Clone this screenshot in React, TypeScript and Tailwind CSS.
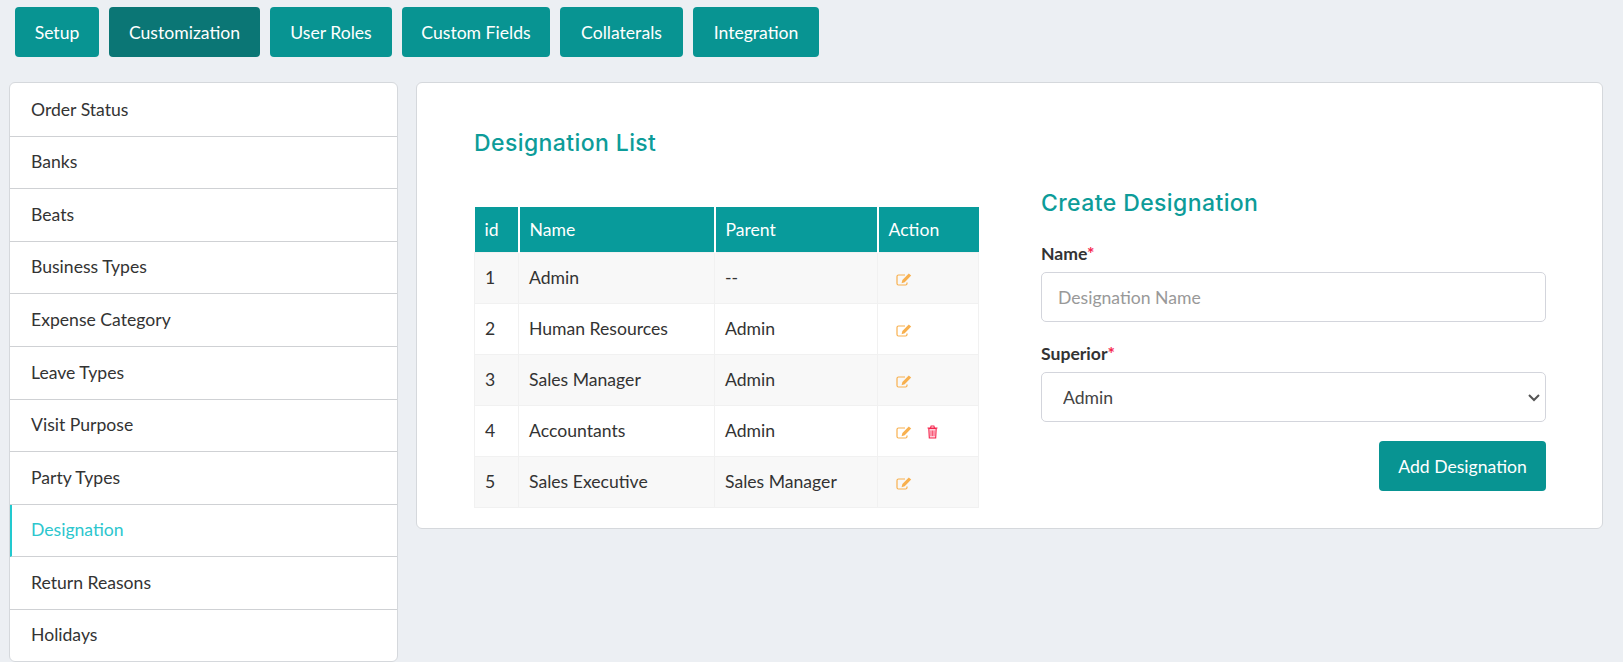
const tabs = [
  { label: "Setup", width: "w-[84px]" },
  { label: "Customization", width: "w-[151px]" },
  { label: "User Roles", width: "w-[122px]" },
  { label: "Custom Fields", width: "w-[148px]" },
  { label: "Collaterals", width: "w-[123px]" },
  { label: "Integration", width: "w-[126px]" },
];

const menu = [
  "Order Status",
  "Banks",
  "Beats",
  "Business Types",
  "Expense Category",
  "Leave Types",
  "Visit Purpose",
  "Party Types",
  "Designation",
  "Return Reasons",
  "Holidays",
];

const rows = [
  { id: 1, name: "Admin", parent: "--" },
  { id: 2, name: "Human Resources", parent: "Admin" },
  { id: 3, name: "Sales Manager", parent: "Admin" },
  { id: 4, name: "Accountants", parent: "Admin", canDelete: true },
  { id: 5, name: "Sales Executive", parent: "Sales Manager" },
];

function EditIcon() {
  return (
    <svg width="16" height="13" viewBox="0 0 16 13" className="shrink-0">
      <path
        d="M11 9.5v1A1.5 1.5 0 0 1 9.5 12h-7A1.5 1.5 0 0 1 1 10.5V3.5A1.5 1.5 0 0 1 2.5 2H9"
        fill="none"
        stroke="#f8b04e"
        strokeWidth="1.2"
      />
      <path d="M12.8.4l2.4 2.2-6.5 6.7-3.1.9.8-3.2z" fill="#f8b04e" />
    </svg>
  );
}

function TrashIcon() {
  return (
    <svg width="11" height="14" viewBox="0 0 11 14" className="shrink-0">
      <path d="M1.8 3.5h7.4l-.5 9.5H2.3z" fill="#ffd0da" stroke="#f5264e" strokeWidth="1.1" />
      <path d="M.5 3h10M3.5 3l.6-2h2.8l.6 2" fill="none" stroke="#f5264e" strokeWidth="1.1" />
      <path d="M4 5.5v5.5M5.5 5.5v5.5M7 5.5v5.5" stroke="#f5264e" strokeWidth="0.7" />
    </svg>
  );
}

export default function App() {
  return (
    <div className="h-[662px] overflow-hidden bg-[#eceff3] font-['Lato',sans-serif] text-[17.6px] text-[#333]">
      <div className="flex gap-[10px] pl-[15px] pt-[7px]">
        {tabs.map((tab) => (
          <button
            key={tab.label}
            className={`h-[50px] rounded-[4px] pt-[2px] text-white ${tab.width} ${
              tab.label === "Customization" ? "bg-[#0b7675]" : "bg-[#089492]"
            }`}
          >
            {tab.label}
          </button>
        ))}
      </div>

      <div className="mt-[25px] flex items-start gap-[18px] pl-[9px] pr-[20px]">
        <ul className="w-[389px] shrink-0 rounded-[6px] border border-[#d5d8dc] bg-white pt-[1px]">
          {menu.map((item, i) => (
            <li
              key={item}
              className={`flex h-[52.6px] items-center pl-[21px] last:h-[51px] ${
                i < menu.length - 1 ? "border-b border-[#cfd1d4]" : ""
              } ${item === "Designation" ? "border-l-[2px] !pl-[19px] border-l-[#22c9cf] text-[#2cc6ce]" : ""}`}
            >
              {item}
            </li>
          ))}
        </ul>

        <div className="flex h-[447px] flex-1 gap-[62px] rounded-[6px] border border-[#d5d8dc] bg-white pl-[57px] pr-[56px]">
          <div className="w-[505px] shrink-0">
            <h2 className="mt-[45px] h-[79px] font-['Inter',sans-serif] text-[23px] font-medium leading-[30px] tracking-[0.4px] text-[#0d9c99]">
              Designation List
            </h2>
            <table className="w-[505px] table-fixed border-collapse">
              <thead>
                <tr className="h-[45px] bg-[#089b9b] text-left text-white">
                  <th className="w-[44px] border-r-[2px] border-white pl-[10px] pt-[1px] font-normal">id</th>
                  <th className="w-[196px] border-r-[2px] border-white pl-[10px] pt-[1px] font-normal">Name</th>
                  <th className="w-[163px] border-r-[2px] border-white pl-[10px] pt-[1px] font-normal">Parent</th>
                  <th className="pl-[10px] pt-[1px] font-normal">Action</th>
                </tr>
              </thead>
              <tbody>
                {rows.map((row, i) => (
                  <tr key={row.id} className={`h-[51px] ${i % 2 === 0 ? "bg-[#f8f8f8]" : "bg-white"}`}>
                    <td className="border border-[#f1f1f1] pl-[10px] pt-[2px]">{row.id}</td>
                    <td className="border border-[#f1f1f1] pl-[10px] pt-[2px]">{row.name}</td>
                    <td className="border border-[#f1f1f1] pl-[10px] pt-[2px]">{row.parent}</td>
                    <td className="border border-[#f1f1f1] pl-[18px]">
                      <div className="flex items-center gap-[15px] pt-[3px]">
                        <EditIcon />
                        {row.canDelete && <TrashIcon />}
                      </div>
                    </td>
                  </tr>
                ))}
              </tbody>
            </table>
          </div>

          <div className="flex-1 pt-[102px]">
            <h2 className="h-[43px] font-['Inter',sans-serif] text-[23px] font-medium leading-[36px] tracking-[0.4px] text-[#0d9c99]">
              Create Designation
            </h2>
            <label className="block h-[44px] pt-[14px] font-bold leading-[24px]">
              Name<span className="text-[#f5264e]">*</span>
            </label>
            <input
              placeholder="Designation Name"
              className="block h-[50px] w-full rounded-[5px] border border-[#d3d5dc] px-[16px] outline-none placeholder:text-[#999]"
            />
            <label className="block h-[50px] pt-[20px] font-bold leading-[24px]">
              Superior<span className="text-[#f5264e]">*</span>
            </label>
            <div className="relative">
              <select className="block h-[50px] w-full appearance-none rounded-[5px] border border-[#d3d5dc] bg-white px-[21px] pt-[2px] text-[#444] outline-none">
                <option>Admin</option>
              </select>
              <svg
                width="12"
                height="8"
                viewBox="0 0 12 8"
                className="pointer-events-none absolute right-[6px] top-[22px]"
              >
                <path d="M1 1l5 5 5-5" fill="none" stroke="#555" strokeWidth="2" />
              </svg>
            </div>
            <div className="mt-[19px] flex justify-end">
              <button className="h-[50px] w-[167px] rounded-[4px] bg-[#089492] pt-[2px] text-white">
                Add Designation
              </button>
            </div>
          </div>
        </div>
      </div>
    </div>
  );
}
